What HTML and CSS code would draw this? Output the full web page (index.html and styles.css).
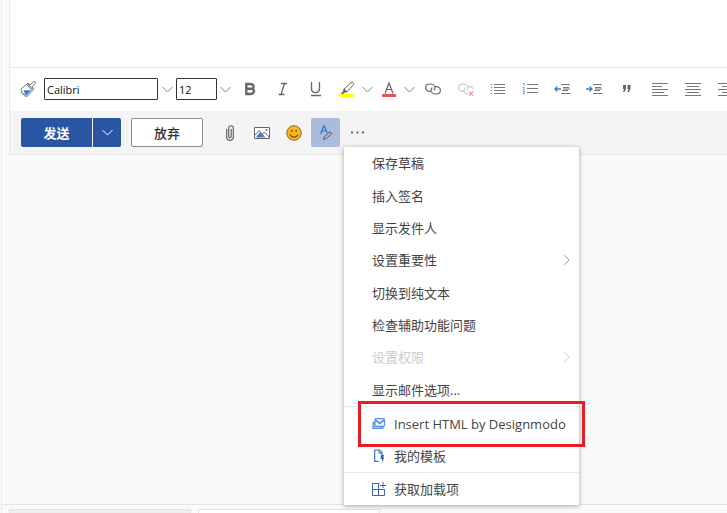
FILE: index.html
```html
<!DOCTYPE html>
<html lang="zh-CN">
<head>
<meta charset="utf-8">
<title>撰写邮件</title>
<link rel="stylesheet" href="styles.css">
</head>
<body>
<svg class="defs" aria-hidden="true">
  <symbol id="down" viewBox="0 0 11 7"><path d="M.5 1l5 5 5-5"/></symbol>
  <symbol id="right" viewBox="0 0 7 12"><path d="M1 .8L6 6l-5 5.2"/></symbol>
</svg>
<div class="app">
  <main class="compose">
    <div class="editor"></div>
    <div class="format">
      <button class="brush" aria-label="格式刷"><svg width="16" height="16" viewBox="0 0 16 16"><path d="M.8 8.200L6.500 3.500l6 6.200-5 5.500H5l-.5-1.700-1.700.2.200-1.700-1.700-.5.700-1.300z" fill="#fff" stroke="#777"/><path d="M3.500 9.300h7.800L7 14.200H5.500z" fill="#3b7bd8"/><path d="M6.500 3.500l1.700-1.300 1.900 1.900L13.600.6c1-.6 2.200.7 1.700 1.600L12 5.800l1.700 1.900-1.500 1.600M7.700 3l5 5.200" fill="none" stroke="#666"/></svg></button>
      <input class="field family" aria-label="字体" value="Calibri">
      <button class="arrow family-arrow" aria-label="选择字体"><svg width="11" height="7"><use href="#down"/></svg></button>
      <input class="field size" aria-label="字号" value="12">
      <button class="arrow size-arrow" aria-label="选择字号"><svg width="11" height="7"><use href="#down"/></svg></button>
      <button class="tool wide" aria-label="加粗"><svg width="16" height="16" viewBox="0 0 16 16"><path d="M4.300 3v10H8c5 0 5-5.300 1.500-5.300C12.500 7.500 12.500 3 8 3zM4.500 7.700h5" fill="none" stroke="#666" stroke-width="2.400"/></svg></button>
      <button class="tool wide" aria-label="斜体"><svg width="16" height="16" viewBox="0 0 16 16"><path d="M6 2.500h6M3.500 13.500h6M9.500 2.500l-3.500 11" fill="none" stroke="#666" stroke-width="1.300"/></svg></button>
      <button class="tool wide" aria-label="下划线"><svg width="16" height="16" viewBox="0 0 16 16"><path d="M3.500 1v6.500c0 5.500 8 5.500 8 0V1M3 14.500h10" fill="none" stroke="#666" stroke-width="1.300"/></svg></button>
      <div class="picker">
        <button class="tool" aria-label="突出显示"><svg width="16" height="16" viewBox="0 0 16 16"><path d="M0 13h15v3H0z" fill="#ffff00"/><path d="M5 8l7-6.500c1.500-1 3.500.5 2.300 2.200L8 11z" fill="#fff" stroke="#666"/><path d="M4.500 7.500L8.500 11l-3 .8L4 13H1.500L4 10.500z" fill="#666"/></svg></button>
        <button class="arrow" aria-label="突出显示颜色"><svg width="11" height="7"><use href="#down"/></svg></button>
      </div>
      <div class="picker">
        <button class="tool" aria-label="字体颜色"><svg width="16" height="16" viewBox="0 0 16 16"><path d="M1 13h14v3H1z" fill="#e8564f"/><path d="M4 12.500L8 2l4 10.500M5.500 8.500h5" fill="none" stroke="#666" stroke-width="1.200"/></svg></button>
        <button class="arrow" aria-label="选择字体颜色"><svg width="11" height="7"><use href="#down"/></svg></button>
      </div>
      <button class="tool wide" aria-label="插入链接"><svg width="16" height="12" viewBox="0 0 16 12"><path d="M6.500 8C3 9 .6 7.200.6 4.800.6 2.300 2.500 1 5 1s5 1.500 5 3.800c0 1-.6 1.900-1.300 2.400M9.500 4c3.500-1 5.900.8 5.900 3.200 0 2.500-1.900 3.800-4.400 3.800S6 9.500 6 7.200c0-1 .6-1.900 1.300-2.400" fill="none" stroke="#666" stroke-width="1.200"/></svg></button>
      <button class="tool wide" aria-label="删除链接" disabled><svg width="16" height="14" viewBox="0 0 16 14"><path d="M6.500 9C3 10 .6 8.200.6 5.800.6 3.300 2.500 2 5 2s5 1.500 5 3.800c0 1-.6 1.900-1.300 2.400M9.500 5c3-1 5.500.5 5.900 2.500M10 12C7.500 12 6 10.500 6 8.200c0-1 .6-1.900 1.300-2.400" fill="none" stroke="#c8c8c8" stroke-width="1.200"/><path d="M11 9.500l4 4m0-4l-4 4" stroke="#f09a96" stroke-width="1.300"/></svg></button>
      <button class="tool list" aria-label="项目符号"><svg width="14" height="10" viewBox="0 0 14 10"><path d="M3 .5h11M3 3.500h11M3 6.500h11M3 9.500h11" stroke="#777"/><path d="M0 .5h1M0 3.500h1M0 6.500h1M0 9.500h1" stroke="#3b7bd8"/></svg></button>
      <button class="tool list" aria-label="编号"><svg width="16" height="12" viewBox="0 0 16 12"><path d="M5 1.500h11M5 5.500h11M5 9.500h11" stroke="#777"/><path d="M1 .5h1V3M.5 4.500H2v1L1 7h1.500M1 8.500h1.200V11H.8" fill="none" stroke="#5c97e6"/></svg></button>
      <button class="tool list" aria-label="减少缩进"><svg width="16" height="10" viewBox="0 0 16 10"><path d="M7 .5h9M9 3.500h6M8 6.500h6M7 9.500h9M9 5h7" stroke="#777"/><path d="M7 5H1M3.500 2.500L1 5l2.500 2.500" fill="none" stroke="#3b7bd8" stroke-width="1.300"/></svg></button>
      <button class="tool list" aria-label="增加缩进"><svg width="16" height="10" viewBox="0 0 16 10"><path d="M7 .5h9M9 3.500h6M8 6.500h6M7 9.500h9M9 5h7" stroke="#777"/><path d="M0 5h6M3.500 2.500L6 5 3.500 7.500" fill="none" stroke="#3b7bd8" stroke-width="1.300"/></svg></button>
      <button class="tool wide" aria-label="引用"><svg width="8" height="8" viewBox="0 0 8 8"><path d="M0 0h3v4L1.500 7H0l1-3H0zM4.500 0h3v4L6 7H4.500l1-3h-1z" fill="#666"/></svg></button>
      <button class="tool wide" aria-label="左对齐"><svg width="16" height="13" viewBox="0 0 16 13"><path d="M0 .5h16M0 3.500h10M0 6.500h16M0 9.500h12M0 12.500h16" stroke="#777"/></svg></button>
      <button class="tool wide" aria-label="居中"><svg width="16" height="13" viewBox="0 0 16 13"><path d="M0 .5h16M2 3.500h12M0 6.500h16M2 9.500h12M0 12.500h16" stroke="#777"/></svg></button>
      <button class="tool wide" aria-label="右对齐"><svg width="16" height="13" viewBox="0 0 16 13"><path d="M0 .5h16M4 3.500h12M0 6.500h16M4 9.500h12M0 12.500h16" stroke="#777"/></svg></button>
    </div>
    <div class="actions">
      <div class="split">
        <button class="send">发送</button>
        <button class="send-more" aria-label="发送选项"><svg width="11" height="7"><use href="#down"/></svg></button>
      </div>
      <button class="discard">放弃</button>
      <div class="icons">
        <button class="icon" aria-label="附件"><svg width="8" height="16" viewBox="0 0 8 16"><path d="M.7 4v8c0 4.400 6.600 4.400 6.600 0V3c0-3-4.600-3-4.600 0v8.500c0 1.700 2.500 1.700 2.500 0V4" fill="none" stroke="#666" stroke-width="1.200"/></svg></button>
        <button class="icon" aria-label="图片"><svg width="16" height="12" viewBox="0 0 16 12"><path d="M.5.5h15v11H.5z" fill="#fff" stroke="#666"/><path d="M2 10.500L6 5l4.500 5.500z" fill="#3b7bd8"/><path d="M1 8l4-4.500 6 7M8.500 7.500l2-2.500 4.500 5" fill="none" stroke="#666"/><circle cx="12.500" cy="3" r="1" fill="#666"/></svg></button>
        <button class="icon" aria-label="表情"><svg width="16" height="16" viewBox="0 0 16 16"><circle cx="8" cy="8" r="7.300" fill="#fcb714" stroke="#8a6b2c"/><path d="M4 9.500c1.500 3.600 6.500 3.600 8 0" fill="none" stroke="#665020" stroke-width="1.200"/><path d="M5 5h1.500v1.700H5zM9.500 5H11v1.700H9.500z" fill="#665020"/></svg></button>
        <button class="icon active" aria-label="格式选项"><svg width="14" height="16" viewBox="0 0 14 16"><path d="M1.500 9L5 .8 8.300 8M2.700 6h4.700" fill="none" stroke="#2f6fd0" stroke-width="1.200"/><path d="M4.500 14.500l1-3L11 6.700l1.800 1.800-5.300 5z" fill="#a9bcdc" stroke="#555"/></svg></button>
        <div class="more">
          <button class="icon" aria-label="更多" aria-expanded="true"><svg width="13" height="3" viewBox="0 0 13 3"><path d="M0 .5h2v2H0zM5.500.5h2v2h-2zM11 .5h2v2h-2z" fill="#5d6878"/></svg></button>
          <div class="menu">
            <div class="main-group">
              <button class="item">保存草稿</button>
              <button class="item">插入签名</button>
              <button class="item">显示发件人</button>
              <button class="item">设置重要性<svg class="sub" width="7" height="12"><use href="#right"/></svg></button>
              <button class="item">切换到纯文本</button>
              <button class="item">检查辅助功能问题</button>
              <button class="item" disabled>设置权限<svg class="sub" width="7" height="12"><use href="#right"/></svg></button>
              <button class="item">显示邮件选项...</button>
            </div>
            <div class="group addins">
              <button class="item marked"><svg class="lead" width="14" height="12" viewBox="0 0 14 12"><path d="M3 3.500L1 4.500v6h9.500l1.200-1.500" fill="#9fc0f0" stroke="#5b92de" stroke-width="1.200"/><rect x="3" y=".7" width="9.500" height="7.600" rx="1" fill="#e8f1ff" stroke="#5b92de" stroke-width="1.200"/><path d="M3.500 2l4.200 3.500L12 2" fill="none" stroke="#3974cc" stroke-width="1.200"/></svg>Insert HTML by Designmodo</button>
              <button class="item"><svg class="lead" width="14" height="14" viewBox="0 0 14 14"><path d="M6.500 12.300H2.700V1H7.500l2.500 2.500V6" fill="none" stroke="#3572bd" stroke-width="1.200"/><path d="M7 1v3.200h3" fill="none" stroke="#3572bd"/><path d="M9 6h3.200l-1 2.500h1.300L9.800 13.500l.4-3.500H8.500z" fill="#2b68b5"/></svg>我的模板</button>
            </div>
            <div class="group">
              <button class="item"><svg class="lead" width="14" height="14" viewBox="0 0 14 14"><path d="M7.500 1.500H.5v12h12v-6H.5M6.500 1.500v12M11 0v6M8 3.500h6" fill="none" stroke="#3a63b0"/></svg>获取加载项</button>
            </div>
          </div>
        </div>
      </div>
    </div>
  </main>
  <footer class="tabs"><div class="tab"></div><div class="tab current"></div></footer>
</div>
</body>
</html>
```
FILE: styles.css
```css
* { box-sizing: border-box; }
body {
  margin: 0;
  overflow: hidden;
  background: #fafafa;
  color: #444;
  font: 13px/16px "Open Sans", "Noto Sans CJK SC", sans-serif;
}
button {
  display: flex;
  align-items: center;
  justify-content: center;
  flex: none;
  margin: 0;
  padding: 0;
  border: 0;
  background: none;
  color: inherit;
  font: inherit;
}
svg { display: block; flex: none; }
.defs { position: absolute; width: 0; height: 0; }
.app {
  display: flex;
  flex-direction: column;
  min-height: 100vh;
  margin-left: 1px;
  border-left: 1px solid #eaeaea;
}
.compose { flex: 1; margin-left: 7px; }
.editor {
  height: 68px;
  border-bottom: 1px solid #eaeaea;
  border-left: 1px solid #eaeaea;
  background: #fff;
}
.format {
  display: flex;
  align-items: center;
  height: 43px;
  padding: 0 0 1px 10px;
  border-left: 1px solid #eaeaea;
  background: #fff;
}
.brush { width: 16px; margin-right: 8px; }
.field {
  flex: none;
  height: 22px;
  padding: 0 2px;
  border: 1px solid #333;
  border-radius: 1px;
  background: #fff;
  color: #111;
  font: 11px/16px "Open Sans", sans-serif;
}
.family { width: 114px; }
.size { width: 41px; }
.arrow {
  width: 12px;
  height: 24px;
  fill: none;
  stroke: #6583b5;
}
.family-arrow { width: 18px; }
.size-arrow { width: 16px; }
.tool { width: 29px; height: 28px; }
.tool.wide { width: 33px; }
.tool.list { width: 32px; }
.picker { display: flex; align-items: center; flex: none; margin-right: 1px; }
.actions {
  display: flex;
  align-items: center;
  height: 44px;
  padding-left: 11px;
  border-bottom: 1px solid #eaeaea;
  border-left: 1px solid #eaeaea;
  background: #f4f4f4;
}
.split { display: flex; gap: 1px; margin-right: 10px; }
.send, .send-more {
  height: 29px;
  background: #2955a3;
  color: #fff;
  font-weight: 700;
}
.send { width: 71px; border-radius: 2px 0 0 2px; }
.send-more { width: 28px; border-radius: 0 2px 2px 0; fill: none; stroke: #fff; }
.discard {
  width: 72px;
  height: 29px;
  margin-right: 12px;
  border: 1px solid #8a8a8a;
  border-radius: 2px;
  background: #fff;
  color: #333;
  font-weight: 500;
}
.icons { display: flex; gap: 3px; }
.icon { width: 29px; height: 29px; border-radius: 2px; }
.icon.active { background: #a9bcdc; }
.more { position: relative; }
.menu {
  position: absolute;
  z-index: 1;
  top: 100%;
  left: 1px;
  width: 235px;
  background: #fff;
  box-shadow: 0 1px 5px rgba(0, 0, 0, .35);
}
.main-group { display: flex; flex-direction: column; height: 259px; }
.main-group .item { flex: 1; }
.group { border-top: 1px solid #eaeaea; }
.addins { padding-top: 1px; }
.item {
  justify-content: flex-start;
  width: 100%;
  height: 32px;
  padding: 0 9px 0 28px;
  white-space: nowrap;
}
.item:disabled { color: #ccc; }
.lead { margin-right: 8px; }
.sub { margin-left: auto; fill: none; stroke: #999; }
.item:disabled .sub { stroke: #ccc; }
.marked { position: relative; }
.marked::after {
  content: "";
  position: absolute;
  inset: -7px -6px -7px 14px;
  border: 3px solid #ec1c24;
}
.tabs {
  display: flex;
  gap: 7px;
  height: 9px;
  padding: 4px 0 0 7px;
  border-top: 1px solid #e4e4e4;
}
.tab {
  width: 182px;
  border: 1px solid #e4e4e4;
  border-bottom: 0;
  background: #eee;
}
.tab.current { background: #fff; }
```
